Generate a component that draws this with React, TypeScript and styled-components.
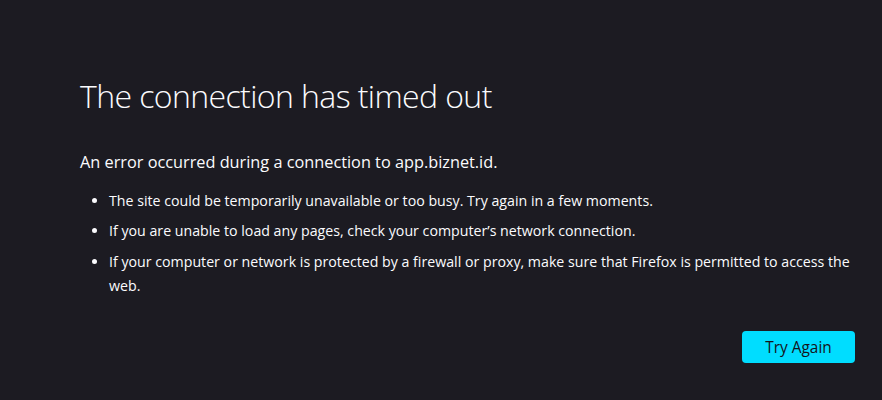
import React from "react";
import styled, { createGlobalStyle } from "styled-components";

const GlobalStyle = createGlobalStyle`
  html, body {
    margin: 0;
    padding: 0;
    background: #1c1b22;
  }
  body {
    font-family: "Open Sans", "Noto Sans", sans-serif;
    color: #fbfbfe;
  }
`;

const Page = styled.main`
  min-height: 400px;
  box-sizing: border-box;
  background: #1c1b22;
  padding: 74px 27px 0 80px;
`;

const Container = styled.div`
  display: flex;
  flex-direction: column;
`;

const Title = styled.h1`
  margin: 0;
  font-size: 32px;
  line-height: 44px;
  letter-spacing: -0.6px;
  font-weight: 300;
  color: #fbfbfe;
`;

const Intro = styled.p`
  margin: 31.5px 0 0;
  font-size: 16.3px;
  line-height: 24px;
  font-weight: 400;
`;

const List = styled.ul`
  margin: 15px 0 0;
  padding: 0 0 0 29px;
  font-size: 14.2px;
  line-height: 24px;
`;

const Item = styled.li`
  margin: 0;
  & + & {
    margin-top: 6.5px;
  }
`;

const ButtonRow = styled.div`
  display: flex;
  justify-content: flex-end;
  margin-top: 33.5px;
`;

const Button = styled.button`
  width: 113px;
  height: 32px;
  padding: 0;
  border: none;
  border-radius: 4px;
  background: #00ddff;
  color: #15141a;
  font-family: "Open Sans", "Noto Sans", sans-serif;
  font-size: 15.4px;
  font-weight: 400;
  cursor: pointer;
`;

const items = [
  "The site could be temporarily unavailable or too busy. Try again in a few moments.",
  "If you are unable to load any pages, check your computer\u2019s network connection.",
  "If your computer or network is protected by a firewall or proxy, make sure that Firefox is permitted to access the web.",
];

export default function App() {
  return (
    <>
      <GlobalStyle />
      <Page>
        <Container>
          <Title>The connection has timed out</Title>
          <Intro>An error occurred during a connection to app.biznet.id.</Intro>
          <List>
            {items.map((t) => (
              <Item key={t}>{t}</Item>
            ))}
          </List>
          <ButtonRow>
            <Button>Try Again</Button>
          </ButtonRow>
        </Container>
      </Page>
    </>
  );
}
